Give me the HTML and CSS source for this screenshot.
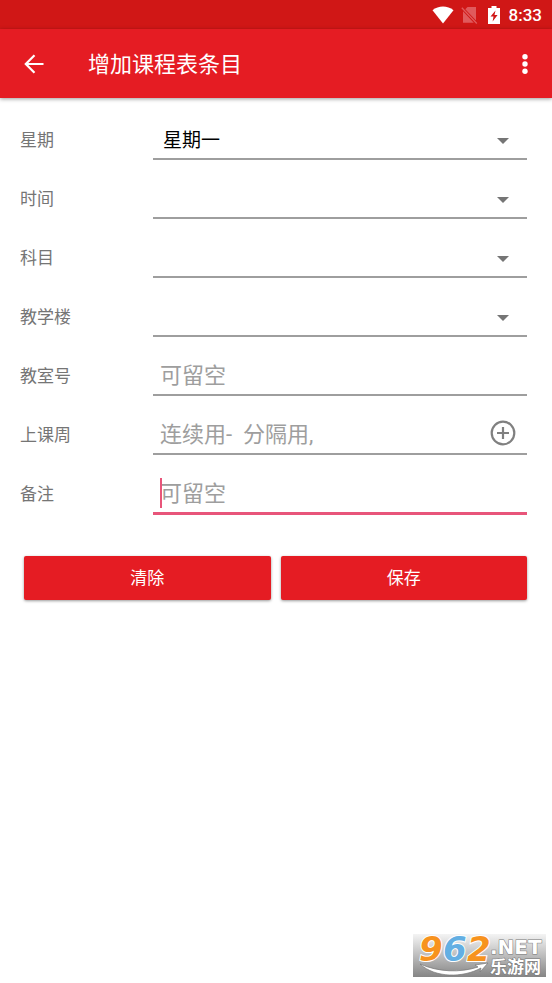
FILE: index.html
```html
<!DOCTYPE html>
<html lang="zh-CN">
<head>
<meta charset="utf-8">
<meta name="viewport" content="width=device-width, initial-scale=1">
<title>增加课程表条目</title>
<link rel="stylesheet" href="styles.css">
</head>
<body>
<div class="status">
  <svg class="wifi" viewBox="0 0 22 18" aria-hidden="true"><path d="M0.500 4.200C6.500-.8 15.500-.8 21.500 4.200L11 17.500z" fill="#fff"/></svg>
  <svg class="sim" viewBox="0 0 17 18" aria-hidden="true"><path d="M6.500 1H15v13.600L4.300 3.300zM2 5.200L12.800 16.800H2z" fill="#e05a5c"/><path d="M.8 1.800L15.800 17.500" stroke="#e05a5c" stroke-width="1.300"/></svg>
  <svg class="battery" viewBox="0 0 12 18" aria-hidden="true"><path d="M3.500 0h5v2H12v16H0V2h3.500z" fill="#fff"/><path d="M7.500 4.500L2.500 10.500h3L4.600 15.500l5-6.500H6.500z" fill="#d01716"/></svg>
  <span class="clock">8:33</span>
</div>
<header class="appbar">
  <button class="icon-button" type="button" aria-label="返回">
    <svg class="back" viewBox="0 0 20 20"><path d="M19.500 10H2M10.500 1.200L1.800 10l8.700 8.800" fill="none" stroke="#fff" stroke-width="2.200"/></svg>
  </button>
  <h1 class="title">增加课程表条目</h1>
  <button class="icon-button" type="button" aria-label="更多">
    <svg class="more" viewBox="0 0 6 20"><g fill="#fff"><circle cx="3" cy="2.700" r="2.700"/><circle cx="3" cy="10" r="2.700"/><circle cx="3" cy="17.300" r="2.700"/></g></svg>
  </button>
</header>
<main>
<form class="form">
  <div class="row">
    <label for="day">星期</label>
    <div class="field">
      <select id="day"><option>星期一</option></select>
      <svg class="arrow" viewBox="0 0 12 6" aria-hidden="true"><path d="M0 0h12L6 6z"/></svg>
    </div>
  </div>
  <div class="row">
    <label for="time">时间</label>
    <div class="field">
      <select id="time"><option></option></select>
      <svg class="arrow" viewBox="0 0 12 6" aria-hidden="true"><path d="M0 0h12L6 6z"/></svg>
    </div>
  </div>
  <div class="row">
    <label for="subject">科目</label>
    <div class="field">
      <select id="subject"><option></option></select>
      <svg class="arrow" viewBox="0 0 12 6" aria-hidden="true"><path d="M0 0h12L6 6z"/></svg>
    </div>
  </div>
  <div class="row">
    <label for="building">教学楼</label>
    <div class="field">
      <select id="building"><option></option></select>
      <svg class="arrow" viewBox="0 0 12 6" aria-hidden="true"><path d="M0 0h12L6 6z"/></svg>
    </div>
  </div>
  <div class="row">
    <label for="room">教室号</label>
    <div class="field"><input id="room" type="text" placeholder="可留空"></div>
  </div>
  <div class="row">
    <label for="weeks">上课周</label>
    <div class="field">
      <input id="weeks" type="text" placeholder="连续用-&nbsp; 分隔用,">
      <button class="add" type="button" aria-label="添加">
        <svg viewBox="0 0 26 26"><circle cx="13" cy="13" r="11.300" fill="none" stroke="#808080" stroke-width="2.200"/><path d="M13 7v12M7 13h12" stroke="#808080" stroke-width="2.200"/></svg>
      </button>
    </div>
  </div>
  <div class="row">
    <label for="note">备注</label>
    <div class="field active"><input id="note" type="text" placeholder="可留空"><span class="caret"></span></div>
  </div>
  <div class="actions">
    <button type="reset">清除</button>
    <button type="submit">保存</button>
  </div>
</form>
</main>
<footer class="brand">
  <svg viewBox="0 -8 133 51" role="img" aria-label="962.NET 乐游网">
    <defs><linearGradient id="shade" x1="0" y1="0" x2="0" y2="1"><stop offset="0" stop-color="#f4f4f4"/><stop offset=".5" stop-color="#bdbdbd"/><stop offset="1" stop-color="#858585"/></linearGradient></defs>
    <rect width="133" height="43" fill="url(#shade)"/>
    <path d="M7 30C22 44 50 44 68 34L67 38L75 29L62 31L65 33C47 39 25 38 7 30z" fill="#fff" stroke="#777" stroke-width=".7"/>
    <g class="digits"><text x="6" y="27" fill="#f7931e">9</text><text x="30" y="27" fill="#63afe3">6</text><text x="54" y="27" fill="#f7931e">2</text></g>
    <text class="net" x="77" y="20">.NET</text>
    <text class="cn" x="77" y="39">乐游网</text>
  </svg>
</footer>
</body>
</html>
```

FILE: styles.css
```css
* { box-sizing: border-box; }

body {
  margin: 0;
  min-height: 100vh;
  display: flex;
  flex-direction: column;
  background: #fff;
  font-family: Roboto, "Noto Sans CJK SC", sans-serif;
}

button, input, select { font-family: inherit; }

button {
  border: 0;
  padding: 0;
  background: none;
}

svg { display: block; }

.status {
  height: 29px;
  padding: 0 10px;
  display: flex;
  align-items: center;
  justify-content: flex-end;
  background: #d01716;
  color: #fff;
}

.wifi { width: 22px; height: 18px; margin-right: 7px; }
.sim { width: 17px; height: 18px; margin-right: 10px; }
.battery { width: 12px; height: 18px; margin-right: 9px; }
.clock { font-size: 17px; font-weight: 500; line-height: 20px; }

.appbar {
  height: 69px;
  padding: 0 15px 0 16px;
  display: flex;
  align-items: center;
  background: #e51c23;
  color: #fff;
  box-shadow: 0 1px 4px rgba(0, 0, 0, 0.4);
}

.icon-button {
  min-width: 24px;
  height: 48px;
  display: flex;
  align-items: center;
  justify-content: center;
}

.appbar .icon-button:first-child { width: 36px; }
.back { width: 20px; height: 20px; }
.more { width: 6px; height: 20px; }

.title {
  flex: 1;
  margin: 0 0 0 36px;
  padding-top: 2px;
  font-size: 22px;
  line-height: 32px;
  font-weight: 400;
}

main { flex: 1; }

.form { padding: 3px 25px 0 20px; }

.row {
  height: 59px;
  display: grid;
  grid-template-columns: 133px 1fr;
}

.row label {
  padding-top: 26px;
  font-size: 17px;
  line-height: 26px;
  color: #757575;
}

.field {
  position: relative;
  display: flex;
  margin-top: 19px;
  border-bottom: 2px solid #9e9e9e;
}

.field select, .field input {
  width: 100%;
  min-width: 0;
  border: 0;
  outline: 0;
  background: none;
  appearance: none;
}

.field select {
  padding: 2px 40px 0 10px;
  font-size: 19px;
  color: #000;
}

.field input {
  padding: 1px 7px 0;
  font-size: 22px;
}

.field input::placeholder { color: #9e9e9e; }

.arrow {
  position: absolute;
  right: 18px;
  top: 18px;
  width: 12px;
  height: 6px;
  fill: #757575;
  pointer-events: none;
}

.add {
  position: absolute;
  right: 11px;
  top: 5px;
  width: 26px;
  height: 26px;
}

.field.active {
  margin-bottom: -1px;
  border-bottom: 3px solid #e8557a;
}

.caret {
  position: absolute;
  left: 7px;
  top: 4px;
  width: 2px;
  height: 30px;
  background: #e8557a;
}

.actions {
  display: grid;
  grid-template-columns: 1fr 1fr;
  gap: 10px;
  margin: 42px 0 0 4px;
}

.actions button {
  height: 44px;
  padding-bottom: 3px;
  border-radius: 2px;
  background: #e51c23;
  color: #fff;
  font-size: 17px;
  box-shadow: 0 1px 3px rgba(0, 0, 0, 0.4);
}

.brand {
  align-self: flex-end;
  width: 133px;
  margin: 0 6px 6px 0;
}

.digits {
  font: italic 700 34px "DejaVu Sans", sans-serif;
  stroke: #fff;
  stroke-width: 2px;
  paint-order: stroke;
}

.net, .cn {
  fill: #fff;
  stroke: #777;
  stroke-width: 1px;
  paint-order: stroke;
}

.net { font: 700 20px "DejaVu Sans", sans-serif; }
.cn { font: 700 17px "Noto Sans CJK SC", sans-serif; }
```
